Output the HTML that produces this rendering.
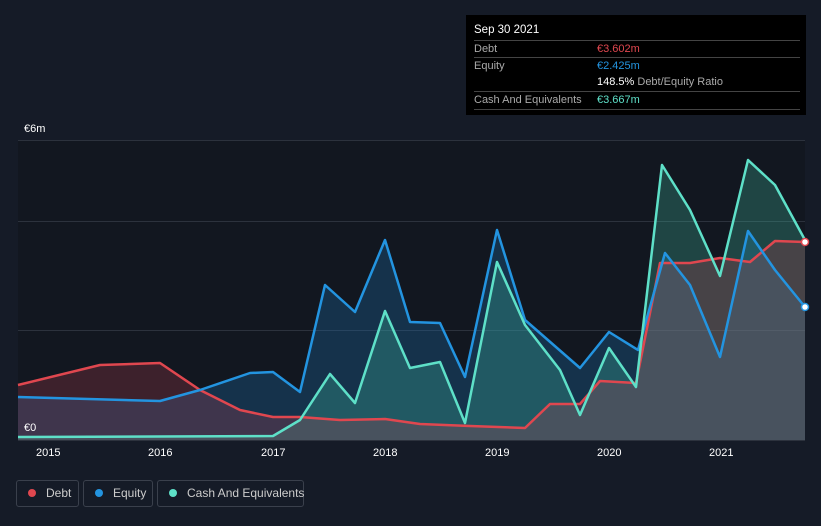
<!DOCTYPE html>
<html><head><style>
html,body{margin:0;width:821px;height:526px;background:#151b27;font-family:"Liberation Sans",sans-serif;overflow:hidden;position:relative}
.tt{position:absolute;left:466px;top:15px;width:340px;height:100px;background:#000;color:#fff;font-size:11px}
.tt .r{position:absolute;left:8px;right:6px;border-top:1px solid #444;height:17px;line-height:17px;color:#aaa}
.tt .v{position:absolute;left:123px}
.lg{position:absolute;top:480px;height:27px;border:1px solid #3a404c;border-radius:3px;color:#ccc;font-size:12px;line-height:25px;box-sizing:border-box;white-space:nowrap}
.dot{display:inline-block;width:8px;height:8px;border-radius:50%;margin:0 10px 0 11px;vertical-align:0}
.ax{position:absolute;color:#fff;font-size:11px}
</style></head><body>
<svg width="821" height="526" style="position:absolute;left:0;top:0">
<rect x="18" y="140" width="787" height="300" fill="#121720"/>
<g stroke="#2c323d" stroke-width="1"><line x1="18" x2="805" y1="140.5" y2="140.5"/><line x1="18" x2="805" y1="221.5" y2="221.5"/><line x1="18" x2="805" y1="330.5" y2="330.5"/><line x1="18" x2="805" y1="440.5" y2="440.5"/></g>
<path d="M18,397 L160,401 200,390 250,373 273,372 300,392 325,285 355,312 385,240 410,322 440,323 465,377 497,230 525,320 580,368 609,332 638,350 665,253 690,285 720,357 748,231 775,270 805,307 L805,440 18,440Z" fill="#1f6fb0" fill-opacity="0.3"/>
<path d="M18,437 L273,436 300,420 330,374 355,403 385,311 410,368 440,362 465,423 497,262 525,325 560,370 580,415 609,348 636,387 662,165 690,210 720,276 748,160 775,185 805,240 L805,440 18,440Z" fill="#3fbfa0" fill-opacity="0.28"/>
<path d="M18,385 L100,365 160,363 200,390 240,410 273,417 300,417 340,420 385,419 420,424 470,426 525,428 550,404 580,404 600,381 636,383 660,263 690,263 720,258 750,262 775,241 805,242 L805,440 18,440Z" fill="#c04050" fill-opacity="0.25"/>
<g fill="none" stroke-width="2.5" stroke-linejoin="round">
<path d="M18,385 L100,365 160,363 200,390 240,410 273,417 300,417 340,420 385,419 420,424 470,426 525,428 550,404 580,404 600,381 636,383 660,263 690,263 720,258 750,262 775,241 805,242" stroke="#e0474f"/>
<path d="M18,397 L160,401 200,390 250,373 273,372 300,392 325,285 355,312 385,240 410,322 440,323 465,377 497,230 525,320 580,368 609,332 638,350 665,253 690,285 720,357 748,231 775,270 805,307" stroke="#2394e0"/>
<path d="M18,437 L273,436 300,420 330,374 355,403 385,311 410,368 440,362 465,423 497,262 525,325 560,370 580,415 609,348 636,387 662,165 690,210 720,276 748,160 775,185 805,240" stroke="#5ee0c8"/>
</g>
<circle cx="805" cy="242" r="3.5" fill="#fff" stroke="#e0474f" stroke-width="1.5"/>
<circle cx="805" cy="307" r="3.5" fill="#fff" stroke="#2394e0" stroke-width="1.5"/>
</svg>
<div class="ax" style="left:24px;top:123px">€6m</div>
<div class="ax" style="left:24px;top:422px">€0</div>
<div class="ax" style="left:36px;top:447px">2015</div><div class="ax" style="left:148px;top:447px">2016</div><div class="ax" style="left:261px;top:447px">2017</div><div class="ax" style="left:373px;top:447px">2018</div><div class="ax" style="left:485px;top:447px">2019</div><div class="ax" style="left:597px;top:447px">2020</div><div class="ax" style="left:709px;top:447px">2021</div>
<div class="tt">
<div style="position:absolute;left:8px;top:9px;font-size:11.5px">Sep 30 2021</div>
<div class="r" style="top:25px">Debt<span class="v" style="color:#e0474f">€3.602m</span></div>
<div class="r" style="top:42px">Equity<span class="v" style="color:#2394e0">€2.425m</span></div>
<div class="r" style="top:59px;border-top:none"><span class="v" style="color:#fff">148.5% <span style="color:#aaa">Debt/Equity Ratio</span></span></div>
<div class="r" style="top:76px;border-bottom:1px solid #444">Cash And Equivalents<span class="v" style="color:#5ee0c8">€3.667m</span></div>
</div>
<div class="lg" style="left:16px;width:63px"><span class="dot" style="background:#e0474f"></span>Debt</div>
<div class="lg" style="left:83px;width:70px"><span class="dot" style="background:#2394e0"></span>Equity</div>
<div class="lg" style="left:157px;width:147px"><span class="dot" style="background:#5ee0c8"></span>Cash And Equivalents</div>
</body></html>
